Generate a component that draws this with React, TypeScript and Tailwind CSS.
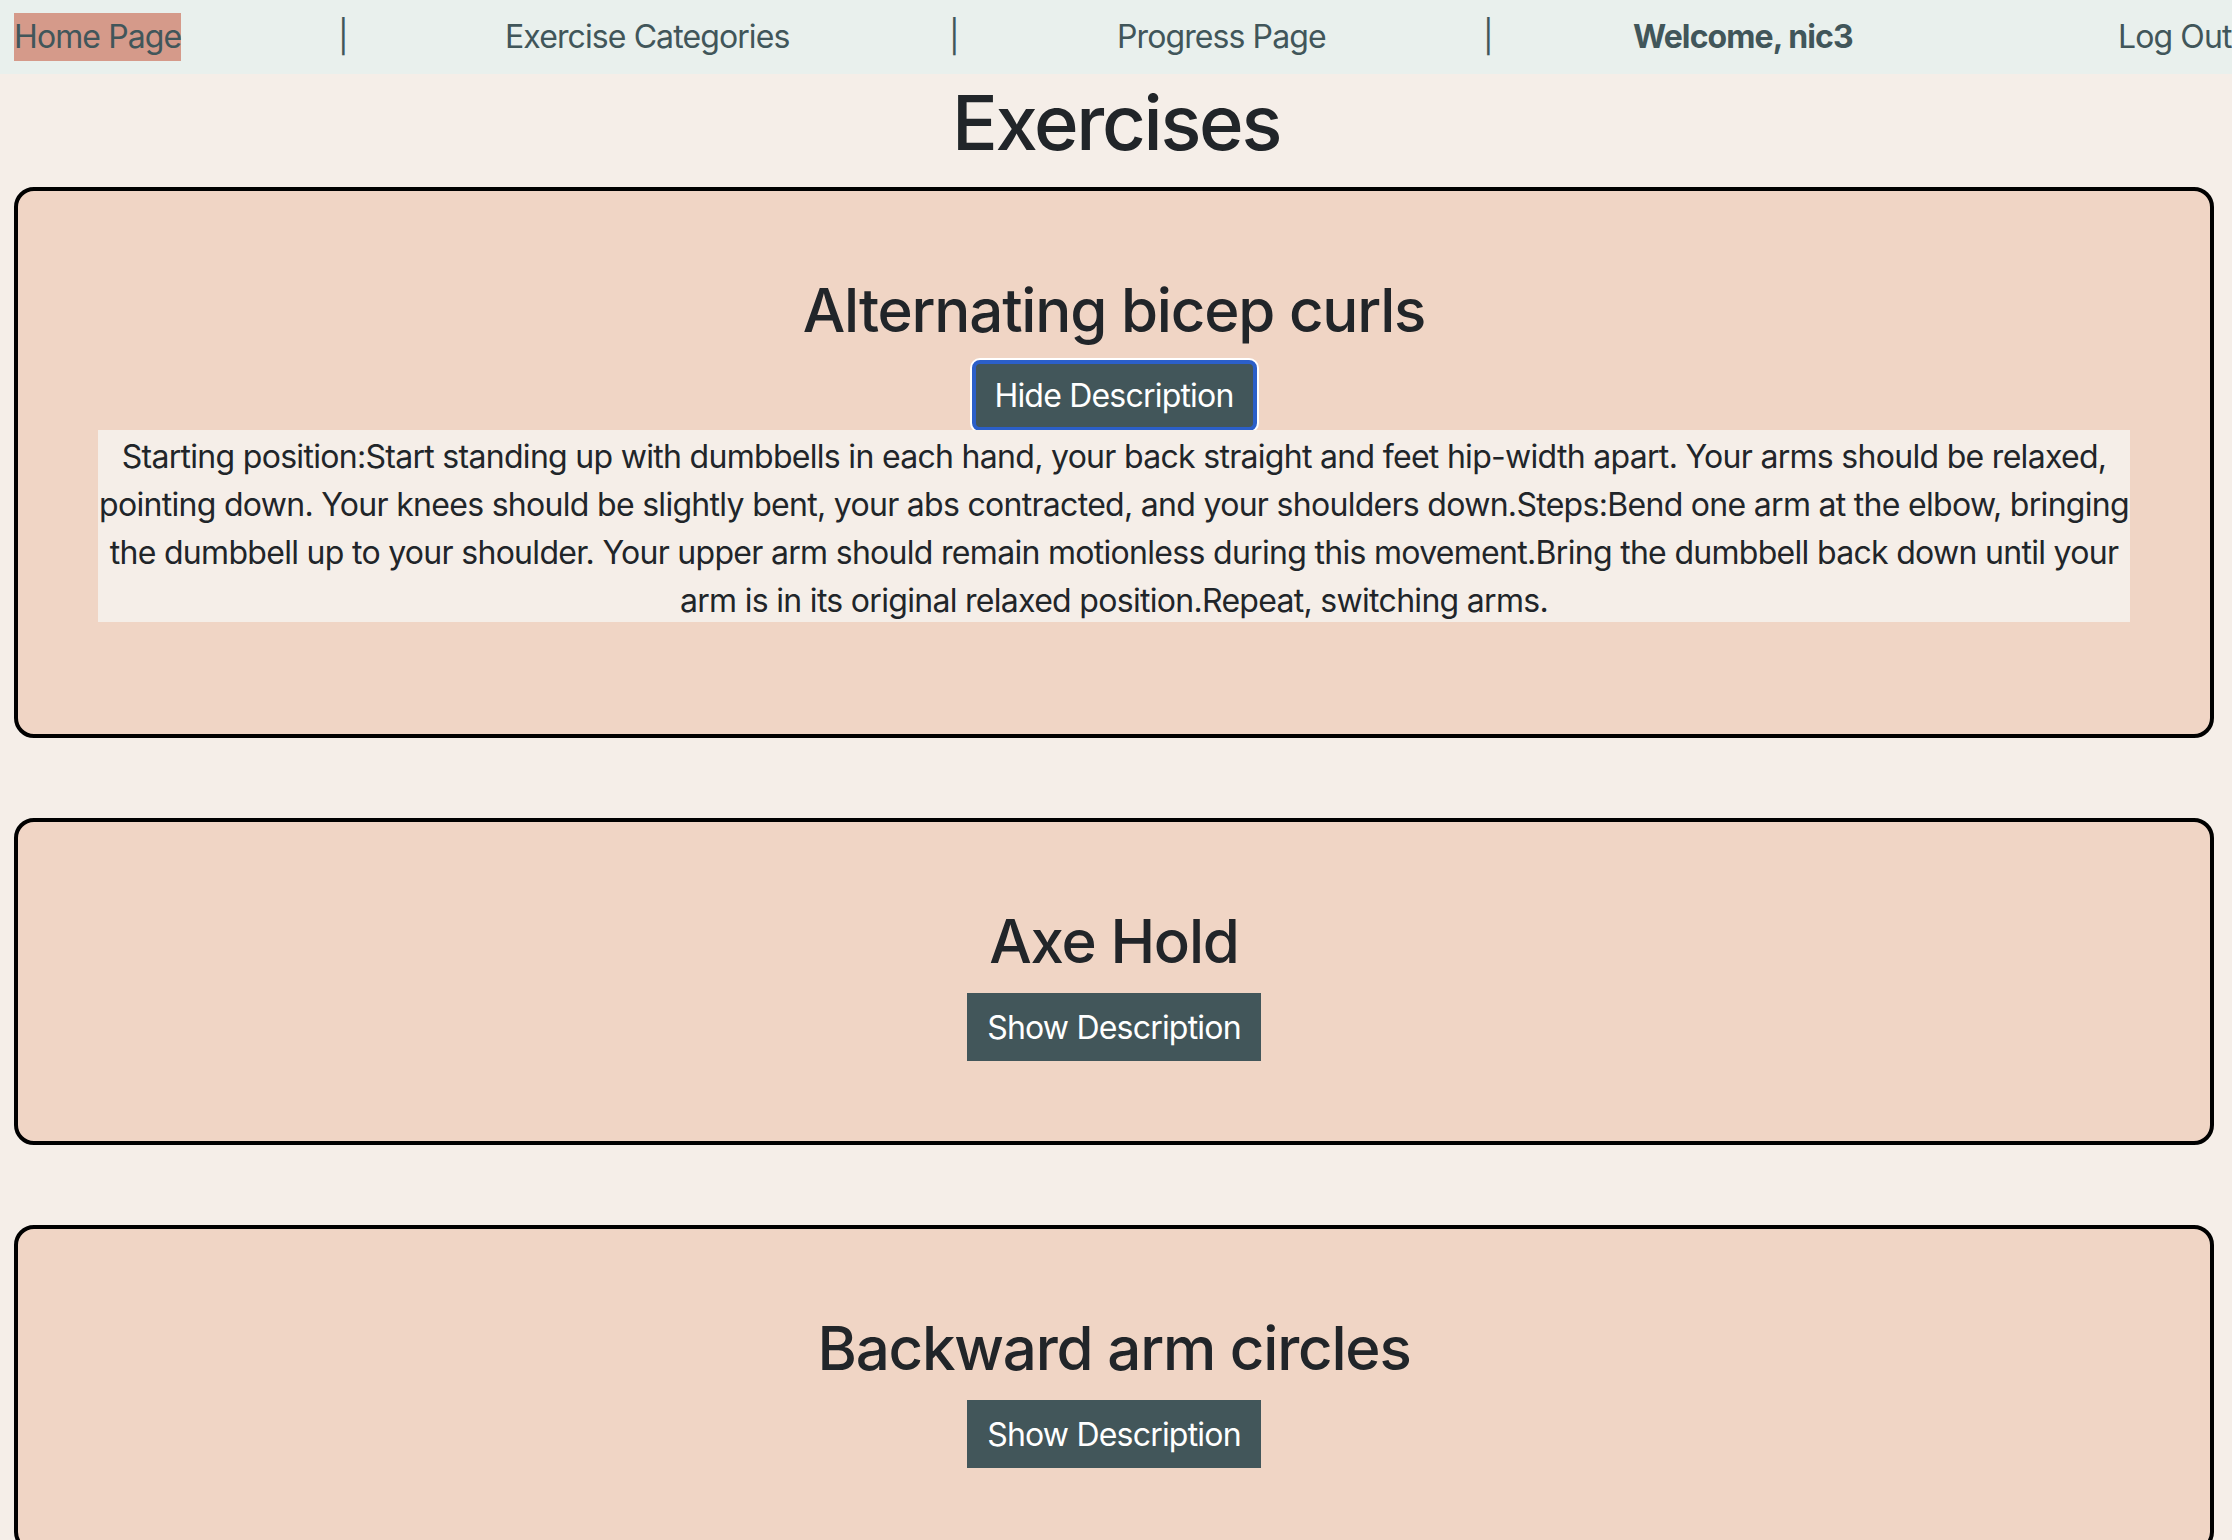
import { useState } from "react";

type Exercise = {
  name: string;
  description: string[];
};

const exercises: Exercise[] = [
  {
    name: "Alternating bicep curls",
    description: [
      "Starting position:Start standing up with dumbbells in each hand, your back straight and feet hip-width apart. Your arms should be relaxed,",
      "pointing down. Your knees should be slightly bent, your abs contracted, and your shoulders down.Steps:Bend one arm at the elbow, bringing",
      "the dumbbell up to your shoulder. Your upper arm should remain motionless during this movement.Bring the dumbbell back down until your",
      "arm is in its original relaxed position.Repeat, switching arms.",
    ],
  },
  { name: "Axe Hold", description: ["Hold a weight plate in front of you with straight arms."] },
  { name: "Backward arm circles", description: ["Extend your arms and rotate them backwards in small circles."] },
];

function NavBar() {
  return (
    <nav className="flex h-[74px] items-center overflow-hidden whitespace-nowrap bg-[#e9f0ed] text-[32px] leading-[48px] tracking-[-0.9px] text-[#41565a]">
      <div className="w-[338px] shrink-0 pl-[14px]">
        <a className="inline-block bg-[#d59a8a]">Home Page</a>
      </div>
      <span className="w-[167px] shrink-0">|</span>
      <a className="w-[444px] shrink-0">Exercise Categories</a>
      <span className="w-[168px] shrink-0">|</span>
      <a className="w-[366px] shrink-0">Progress Page</a>
      <span className="w-[150px] shrink-0">|</span>
      <span className="w-[485px] shrink-0 font-bold">Welcome, nic3</span>
      <a className="shrink-0">Log Out</a>
    </nav>
  );
}

function ExerciseCard({ exercise, open }: { exercise: Exercise; open: boolean }) {
  const [show, setShow] = useState(open);

  return (
    <div className="ml-[14px] mr-[18px] mb-[80px] flex flex-col items-center rounded-[20px] border-4 border-black bg-[#f0d5c5] px-[80px] pt-[83px] pb-[80px]">
      <h2 className="mb-[16px] text-[60px] font-medium leading-[72px] tracking-[-0.02em] text-[#212529]">{exercise.name}</h2>
      {show ? (
        <button
          onClick={() => setShow(false)}
          className="-mt-[2px] h-[71px] w-[285px] rounded-[8px] border-4 border-[#2b5fc9] bg-[#42565a] pt-[1px] text-[32px] leading-[48px] tracking-[-0.8px] text-white shadow-[0_0_0_2px_#ffffff]"
        >
          Hide Description
        </button>
      ) : (
        <button
          onClick={() => setShow(true)}
          className="h-[68px] w-[294px] bg-[#42565a] pt-[1px] text-[32px] leading-[48px] tracking-[-0.8px] text-white"
        >
          Show Description
        </button>
      )}
      {show && (
        <p className="-mt-[1px] mb-[32px] h-[192px] w-[2032px] bg-[#f5eee8] pt-[3px] text-center text-[32px] leading-[48px] tracking-[-0.7px] text-[#212529]">
          {exercise.description.map((line, i) => (
            <span key={i} className="block whitespace-nowrap">
              {line}
            </span>
          ))}
        </p>
      )}
    </div>
  );
}

export default function App() {
  return (
    <div className="h-[1540px] overflow-hidden bg-[#f5eee8] font-[Inter,sans-serif]">
      <NavBar />
      <h1 className="mt-[3px] mb-[19px] text-center text-[76px] font-medium leading-[91px] tracking-[-0.03em] text-[#212529]">Exercises</h1>
      {exercises.map((ex, i) => (
        <ExerciseCard key={ex.name} exercise={ex} open={i === 0} />
      ))}
    </div>
  );
}
